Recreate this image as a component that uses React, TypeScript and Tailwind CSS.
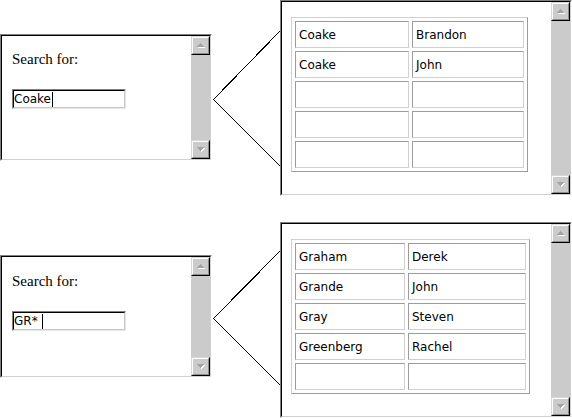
import React from 'react';

type Dir = 'up' | 'down';

// pixel rows of the little scroll arrows: [y, x0, x1]
const arrowRows: Record<Dir, [number, number, number][]> = {
  up: [
    [0, 3, 3],
    [1, 2, 4],
    [2, 1, 5],
    [3, 0, 6],
  ],
  down: [
    [0, 0, 6],
    [1, 1, 5],
    [2, 2, 4],
    [3, 3, 3],
  ],
};

const Arrow = ({ dir }: { dir: Dir }) => (
  <svg width="8" height="5" viewBox="0 0 8 5" shapeRendering="crispEdges">
    {arrowRows[dir].map(([y, a, b]) => (
      <rect key={'w' + y} x={a + 1} y={y + 1} width={b - a + 1} height={1} fill="#ffffff" />
    ))}
    {arrowRows[dir].map(([y, a, b]) => (
      <rect key={'g' + y} x={a} y={y} width={b - a + 1} height={1} fill="#a3a3a3" />
    ))}
  </svg>
);

const ScrollButton = ({ dir }: { dir: Dir }) => (
  <div className="h-[19px] w-full border border-t-[#d8d8d8] border-l-[#d8d8d8] border-r-black border-b-black">
    <div className="flex h-full w-full items-center justify-center border border-t-white border-l-white border-r-[#8c8c8c] border-b-[#8c8c8c] bg-[#cbcbcb]">
      <Arrow dir={dir} />
    </div>
  </div>
);

const Window = ({ className, children }: { className: string; children: React.ReactNode }) => (
  <div className={`shrink-0 border border-t-[#808080] border-l-[#808080] border-r-white border-b-white ${className}`}>
    <div className="flex h-full border border-t-black border-l-black border-r-[#d0d0d0] border-b-[#d0d0d0]">
      <div className="flex-1 bg-white">{children}</div>
      <div className="flex w-[19px] flex-col justify-between bg-[#cbcbcb]">
        <ScrollButton dir="up" />
        <ScrollButton dir="down" />
      </div>
    </div>
  </div>
);

const SearchBox = ({ value, padTop }: { value: string; padTop: string }) => (
  <div className={`pl-[10px] ${padTop}`}>
    <div className="font-['Liberation_Serif',serif] text-[15px] leading-[17px] text-black">Search for:</div>
    <div className="mt-[21px] h-[20px] w-[114px] border border-t-[#808080] border-l-[#808080] border-r-[#e6e6e6] border-b-[#e6e6e6]">
      <div className="flex h-full items-center border border-t-black border-l-black border-r-[#c8c8c8] border-b-[#c8c8c8] font-['DejaVu_Sans',sans-serif] text-[12px] leading-none text-black">
        <span className="whitespace-pre">{value}</span>
        <span className="ml-[1px] inline-block h-[15px] w-[1px] bg-black" />
      </div>
    </div>
  </div>
);

const ResultTable = ({ rows, cols }: { rows: string[][]; cols: string }) => (
  <div className={`grid w-fit ${cols} gap-[3px] border border-t-[#d0d0d0] border-l-[#d0d0d0] border-r-[#9c9c9c] border-b-[#9c9c9c] p-[3px]`}>
    {rows.flat().map((t, i) => (
      <div
        key={i}
        className="flex h-[27px] items-center border border-t-[#9c9c9c] border-l-[#9c9c9c] border-r-[#d0d0d0] border-b-[#d0d0d0] pl-[3px] font-['DejaVu_Sans',sans-serif] text-[12px] text-black"
      >
        {t}
      </div>
    ))}
  </div>
);

const Connector = ({ apex, top, bottom }: { apex: number; top: number; bottom: number }) => (
  <svg width="68" height="196" className="shrink-0" shapeRendering="crispEdges">
    <line x1="1.5" y1={apex + 0.5} x2="68" y2={top} stroke="#000" strokeWidth="1" />
    <line x1="1.5" y1={apex + 0.5} x2="68" y2={bottom} stroke="#000" strokeWidth="1" />
  </svg>
);

export default function App() {
  const first = [
    ['Coake', 'Brandon'],
    ['Coake', 'John'],
    ['', ''],
    ['', ''],
    ['', ''],
  ];
  const second = [
    ['Graham', 'Derek'],
    ['Grande', 'John'],
    ['Gray', 'Steven'],
    ['Greenberg', 'Rachel'],
    ['', ''],
  ];

  return (
    <div className="flex h-[418px] w-[572px] flex-col bg-white">
      <div className="flex h-[196px] items-start">
        <Window className="mt-[34px] h-[127px] w-[212px]">
          <SearchBox value="Coake" padTop="pt-[15px]" />
        </Window>
        <Connector apex={99} top={31} bottom={166} />
        <Window className="h-[196px] w-[292px]">
          <div className="pl-[9px] pt-[15px]">
            <ResultTable rows={first} cols="grid-cols-[114px_112px]" />
          </div>
        </Window>
      </div>

      <div className="mt-[26px] flex h-[196px] items-start">
        <Window className="mt-[33px] h-[123px] w-[212px]">
          <SearchBox value="GR* " padTop="pt-[16px]" />
        </Window>
        <Connector apex={96} top={29} bottom={163} />
        <Window className="h-[196px] w-[292px]">
          <div className="pl-[9px] pt-[15px]">
            <ResultTable rows={second} cols="grid-cols-[110px_118px]" />
          </div>
        </Window>
      </div>
    </div>
  );
}
